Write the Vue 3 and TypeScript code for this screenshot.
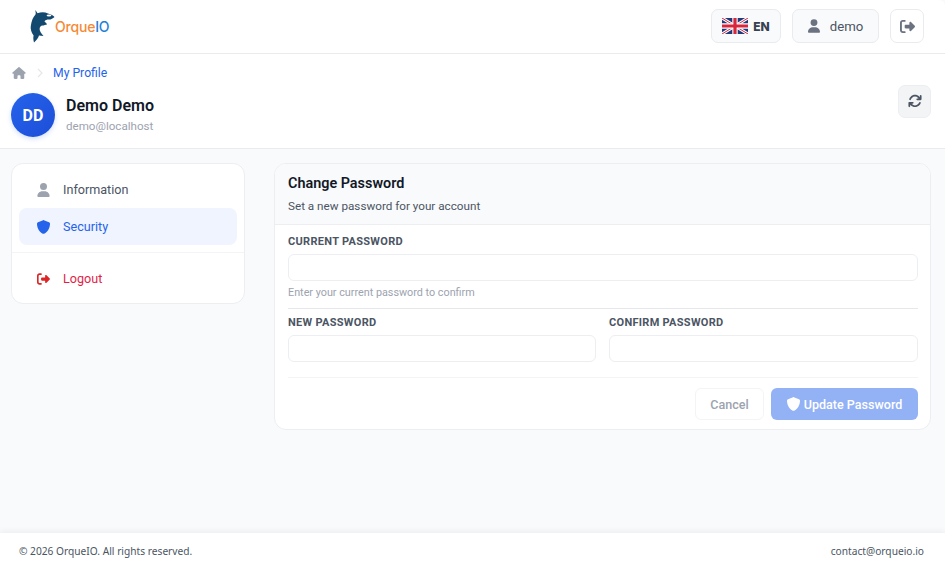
<script setup lang="ts">
const profileName = 'Demo Demo'
</script>

<template>
  <div class="page">
    <header class="topbar">
      <div class="logo">
        <svg class="orca" width="26" height="34" viewBox="0 0 26 34">
          <path fill="#14496f" d="M6 1C7 2 8 3 8.6 4.2C12 3 16 3 19 4.5C22 5.5 24.5 6.5 25.5 8C24 9.5 22 10.6 20 10.6C18 10.6 16 11 15.5 12.5C16.5 13.5 17.5 14 18 15.5C16.5 15.6 15 16.5 13.5 16.6C11.8 16.8 10.8 18 10.6 20C10.6 22 12.5 25 14.5 27C12.8 27 11.2 26.8 10 26.6C9.4 29 7.5 31.5 5 33.6C4.4 31 4 29 4.6 26.6C2.4 23.5 1.2 20 1.8 17C2.5 12 4 8 6.5 5.5C7 4 6.5 2 6 1Z"/>
          <ellipse cx="20" cy="6.6" rx="2.4" ry="1" fill="#fff"/>
        </svg>
        <span class="brand"><span class="brand-a">Orque</span><span class="brand-b">IO</span></span>
      </div>
      <div class="top-actions">
        <button class="tbtn lang">
          <svg width="26" height="16" viewBox="0 0 26 16">
            <rect width="26" height="16" fill="#1f3a7d"/>
            <path d="M0 0l26 16M26 0L0 16" stroke="#fff" stroke-width="3"/>
            <path d="M0 0l26 16M26 0L0 16" stroke="#d8263d" stroke-width="1"/>
            <path d="M13 0v16M0 8h26" stroke="#fff" stroke-width="5.4"/>
            <path d="M13 0v16M0 8h26" stroke="#d8263d" stroke-width="3.2"/>
          </svg>
          <span>EN</span>
        </button>
        <button class="tbtn user">
          <svg width="12" height="14" viewBox="0 0 448 512"><path fill="#6b7280" d="M224 256a128 128 0 1 0 0-256 128 128 0 1 0 0 256zm-45.7 48C79.8 304 0 383.8 0 482.3 0 498.7 13.3 512 29.7 512h388.6c16.4 0 29.7-13.3 29.7-29.7C448 383.8 368.2 304 269.7 304h-91.4z"/></svg>
          <span>demo</span>
        </button>
        <button class="tbtn out">
          <svg width="15" height="15" viewBox="0 0 512 512"><path fill="#6b7280" d="M502.6 278.6c12.5-12.5 12.5-32.8 0-45.3l-128-128c-9.2-9.2-22.9-11.9-34.9-6.9S320 115 320 128v64H192c-17.7 0-32 14.3-32 32v64c0 17.7 14.3 32 32 32h128v64c0 12.9 7.8 24.6 19.8 29.6s25.7 2.2 34.9-6.9l128-128zM160 96c17.7 0 32-14.3 32-32s-14.3-32-32-32H96C43 32 0 75 0 128v256c0 53 43 96 96 96h64c17.7 0 32-14.3 32-32s-14.3-32-32-32H96c-17.7 0-32-14.3-32-32V128c0-17.7 14.3-32 32-32h64z"/></svg>
        </button>
      </div>
    </header>

    <section class="profile-head">
      <nav class="crumbs">
        <svg width="14" height="12" viewBox="0 0 576 512"><path fill="#9ca3af" d="M575.8 255.5c0 18-15 32.1-32 32.1h-32l.7 160.2c0 2.7-.2 5.4-.5 8.1V472c0 22.1-17.9 40-40 40h-16c-1.1 0-2.2 0-3.3-.1-1.4.1-2.8.1-4.2.1H392c-22.1 0-40-17.9-40-40v-88c0-17.7-14.3-32-32-32h-64c-17.7 0-32 14.3-32 32v88c0 22.1-17.9 40-40 40h-55.9c-1.5 0-3-.1-4.5-.2-1.2.1-2.4.2-3.6.2h-16c-22.1 0-40-17.9-40-40V360c0-.9 0-1.9.1-2.8v-69.6H32c-18 0-32-14-32-32.1 0-9 3-17 10-24L266.4 8c7-7 15-8 22-8s15 2 21 7l255.4 224.5c8 7 12 15 11 24z"/></svg>
        <svg class="chev" width="6" height="10" viewBox="0 0 6 10"><path d="M1 1l4 4-4 4" fill="none" stroke="#e5e7eb" stroke-width="1.2"/></svg>
        <a class="crumb-link">My Profile</a>
      </nav>
      <div class="who">
        <div class="avatar">DD</div>
        <div class="who-text">
          <div class="name">{{ profileName }}</div>
          <div class="email">demo@localhost</div>
        </div>
        <button class="refresh">
          <svg width="14" height="14" viewBox="0 0 512 512"><path fill="#4b5563" d="M105.1 202.6c7.7-21.8 20.2-42.3 37.8-59.8 62.5-62.5 163.8-62.5 226.3 0l17.1 17.2H336c-17.7 0-32 14.3-32 32s14.3 32 32 32h127.9c17.7 0 32-14.3 32-32V64c0-17.7-14.3-32-32-32s-32 14.3-32 32v51.2l-17.5-17.6c-87.5-87.5-229.3-87.5-316.8 0-24.4 24.4-41.8 53.1-52.3 83.8-5.8 16.7 2.9 34.9 19.5 40.8s34.9-2.9 40.8-19.5zM39 289.3c-5 1.5-9.8 4.2-13.7 8.2-4 4-6.7 8.8-8.1 14-.3 1.2-.6 2.5-.8 3.8-.3 1.7-.4 3.4-.4 5.1V448c0 17.7 14.3 32 32 32s32-14.3 32-32v-51.1l17.6 17.5c87.5 87.4 229.3 87.4 316.7 0 24.4-24.4 41.9-53.1 52.4-83.7 5.8-16.7-2.9-34.9-19.5-40.8s-34.9 2.9-40.8 19.5c-7.7 21.8-20.2 42.3-37.8 59.8-62.5 62.5-163.8 62.5-226.3 0l-.1-.1-17.1-17.1H176c17.7 0 32-14.3 32-32s-14.3-32-32-32H48.4c-1.6 0-3.2.1-4.8.3s-3.1.5-4.6 1z"/></svg>
        </button>
      </div>
    </section>

    <main class="content">
      <aside class="side">
        <a class="item">
          <svg width="13" height="14" viewBox="0 0 448 512"><path fill="#9ca3af" d="M224 256a128 128 0 1 0 0-256 128 128 0 1 0 0 256zm-45.7 48C79.8 304 0 383.8 0 482.3 0 498.7 13.3 512 29.7 512h388.6c16.4 0 29.7-13.3 29.7-29.7C448 383.8 368.2 304 269.7 304h-91.4z"/></svg>
          <span>Information</span>
        </a>
        <a class="item active">
          <svg class="shield" width="13" height="14" viewBox="16 0 480 512"><path fill="#2563eb" d="M256 0c4.6 0 9.2 1 13.4 2.9l188.3 79.9c22 9.3 38.4 31 38.3 57.2-.5 99.2-41.3 280.7-213.6 363.2-16.7 8-36.1 8-52.8 0C57.3 420.7 16.5 239.2 16 140c-.1-26.2 16.3-47.9 38.3-57.2L242.7 2.9C246.8 1 251.4 0 256 0z"/></svg>
          <span>Security</span>
        </a>
        <div class="side-sep"></div>
        <a class="item danger">
          <svg width="14" height="14" viewBox="0 0 512 512"><path fill="#dc2626" d="M502.6 278.6c12.5-12.5 12.5-32.8 0-45.3l-128-128c-9.2-9.2-22.9-11.9-34.9-6.9S320 115 320 128v64H192c-17.7 0-32 14.3-32 32v64c0 17.7 14.3 32 32 32h128v64c0 12.9 7.8 24.6 19.8 29.6s25.7 2.2 34.9-6.9l128-128zM160 96c17.7 0 32-14.3 32-32s-14.3-32-32-32H96C43 32 0 75 0 128v256c0 53 43 96 96 96h64c17.7 0 32-14.3 32-32s-14.3-32-32-32H96c-17.7 0-32-14.3-32-32V128c0-17.7 14.3-32 32-32h64z"/></svg>
          <span>Logout</span>
        </a>
      </aside>

      <section class="card">
        <div class="card-head">
          <h2>Change Password</h2>
          <p>Set a new password for your account</p>
        </div>
        <form class="card-body" @submit.prevent>
          <label class="lbl">Current Password</label>
          <input class="inp" type="password" />
          <div class="hint">Enter your current password to confirm</div>
          <div class="rule first"></div>
          <div class="two">
            <div class="field">
              <label class="lbl">New Password</label>
              <input class="inp" type="password" />
            </div>
            <div class="field">
              <label class="lbl">Confirm Password</label>
              <input class="inp" type="password" />
            </div>
          </div>
          <div class="actions">
            <button class="cancel" type="button">Cancel</button>
            <button class="update" type="submit">
              <svg width="13" height="14" viewBox="16 0 480 512"><path fill="#fff" d="M256 0c4.6 0 9.2 1 13.4 2.9l188.3 79.9c22 9.3 38.4 31 38.3 57.2-.5 99.2-41.3 280.7-213.6 363.2-16.7 8-36.1 8-52.8 0C57.3 420.7 16.5 239.2 16 140c-.1-26.2 16.3-47.9 38.3-57.2L242.7 2.9C246.8 1 251.4 0 256 0z"/></svg>
              <span>Update Password</span>
            </button>
          </div>
        </form>
      </section>
    </main>

    <footer class="foot">
      <span>© 2026 OrqueIO. All rights reserved.</span>
      <span>contact@orqueio.io</span>
    </footer>
  </div>
</template>

<style>
html, body { margin: 0; background: #f9fafb; }
</style>

<style scoped>
* { box-sizing: border-box; }
.page {
  height: 563px; display: flex; flex-direction: column; overflow: hidden;
  font-family: Roboto, "Liberation Sans", sans-serif; background: #f9fafb; color: #111827;
}
.topbar {
  height: 54px; flex: none; background: #fff; border-bottom: 1px solid #e9ebef;
  display: flex; align-items: center; justify-content: space-between;
  padding: 0 21px 1px 29px;
  box-shadow: 0 1px 2px rgba(0,0,0,.03);
  border-top-right-radius: 6px;
}
.logo { display: flex; align-items: center; gap: 0; }
.orca { display: block; }
.brand { font: 500 14px Inter, Roboto, sans-serif; letter-spacing: -.2px; margin-top: 1px; }
.brand-a { color: #f58a35; }
.brand-b { color: #1f82d8; }
.top-actions { display: flex; align-items: center; gap: 11px; }
.tbtn {
  height: 34px; border: 1px solid #e9ebef; border-radius: 7px; background: #f9fafb;
  display: flex; align-items: center; justify-content: center; padding: 0; font-family: inherit;
}
.lang { width: 70px; gap: 5px; font-size: 12px; font-weight: 800; color: #374151; font-family: Inter, Roboto, sans-serif; }
.user { width: 87px; gap: 10px; font-size: 13.2px; color: #4b5563; }
.out { width: 34px; background: #fff; }
.profile-head {
  height: 95px; flex: none; background: #fff; border-bottom: 1px solid #e9ebef;
  padding: 12px 14px 0 11px;
}
.crumbs { display: flex; align-items: center; height: 14px; font-size: 12.2px; padding-left: 1px; }
.chev { margin: 0 10px 0 11px; }
.crumb-link { color: #2563eb; }
.who { display: flex; align-items: center; margin-top: 13px; }
.avatar {
  width: 44px; height: 44px; border-radius: 50%; flex: none;
  background: linear-gradient(135deg, #2563eb, #1d4ed8);
  color: #fff; font-size: 16px; font-weight: 700;
  display: flex; align-items: center; justify-content: center;
  box-shadow: 0 2px 5px rgba(37,99,235,.2);
}
.who-text { margin-left: 11px; flex: 1; padding-bottom: 2px; }
.name { font-size: 16px; font-weight: 600; line-height: 22px; }
.email { font-size: 11.6px; color: #9ca3af; line-height: 16px; margin-top: 1px; }
.refresh {
  width: 33px; height: 33px; border: 1px solid #eceef1; border-radius: 7px; background: #f3f4f6;
  display: flex; align-items: center; justify-content: center; padding: 0; margin-top: -28px;
}
.content { flex: 1; display: flex; align-items: flex-start; gap: 29px; padding: 14px 14px 0 11px; }
.side {
  width: 234px; flex: none; background: #fff; border: 1px solid #eceef1; border-radius: 12px;
  padding: 7px 7px 6px; display: flex; flex-direction: column;
}
.item {
  height: 37px; border-radius: 8px; display: flex; align-items: center; padding-left: 18px;
  font-size: 12.6px; color: #4b5563;
}
.item svg { width: 13px; margin-right: 13px; flex: none; }
.item.active { background: #eff4ff; color: #2563eb; }
.item.danger { color: #e11d48; }
.side-sep { height: 1px; background: #f3f4f6; margin: 7px -7px 7px; }
.card { flex: 1; background: #fff; border: 1px solid #eceef1; border-radius: 12px; overflow: hidden; }
.card-head { height: 61px; background: #f9fafb; border-bottom: 1px solid #eceef1; padding: 12px 13px 0; }
.card-head h2 { margin: 0; font-size: 14.4px; font-weight: 600; line-height: 16px; color: #111827; }
.card-head p { margin: 7px 0 0; font-size: 11.7px; line-height: 14px; color: #4b5563; }
.card-body { padding: 10px 12px 9px 13px; display: flex; flex-direction: column; }
.lbl { display: block; font-size: 11px; font-weight: 700; line-height: 13px; letter-spacing: .3px; text-transform: uppercase; color: #4b5563; }
.inp { display: block; width: 100%; height: 27px; margin-top: 6px; border: 1px solid #eceef1; border-radius: 6px; background: #fff; outline: none; }
.hint { font-size: 10.8px; line-height: 13px; color: #9ca3af; margin-top: 5px; }
.rule.first { height: 1px; background: #e5e7eb; margin-top: 9px; }
.two { display: grid; grid-template-columns: 308fr 309fr; gap: 13px; margin-top: 7px; }
.actions { border-top: 1px solid #f3f4f6; margin-top: 15px; padding-top: 10px; display: flex; justify-content: flex-end; gap: 7px; }
.cancel, .update { height: 32px; border-radius: 6px; font-family: inherit; font-size: 12.55px; font-weight: 500; padding: 0; display: flex; align-items: center; justify-content: center; }
.cancel { width: 69px; border: 1px solid #f3f4f6; background: #fff; color: #9ca3af; }
.update { width: 147px; border: none; background: #93b1f5; color: #fff; gap: 4px; }
.foot {
  height: 30px; flex: none; background: #fff;
  display: flex; align-items: center; justify-content: space-between;
  padding: 5px 21px 0 19px; font-family: "Noto Sans", sans-serif; font-size: 10.2px; color: #4b5563;
  box-shadow: 0 -2px 6px rgba(0,0,0,.05);
}
</style>
